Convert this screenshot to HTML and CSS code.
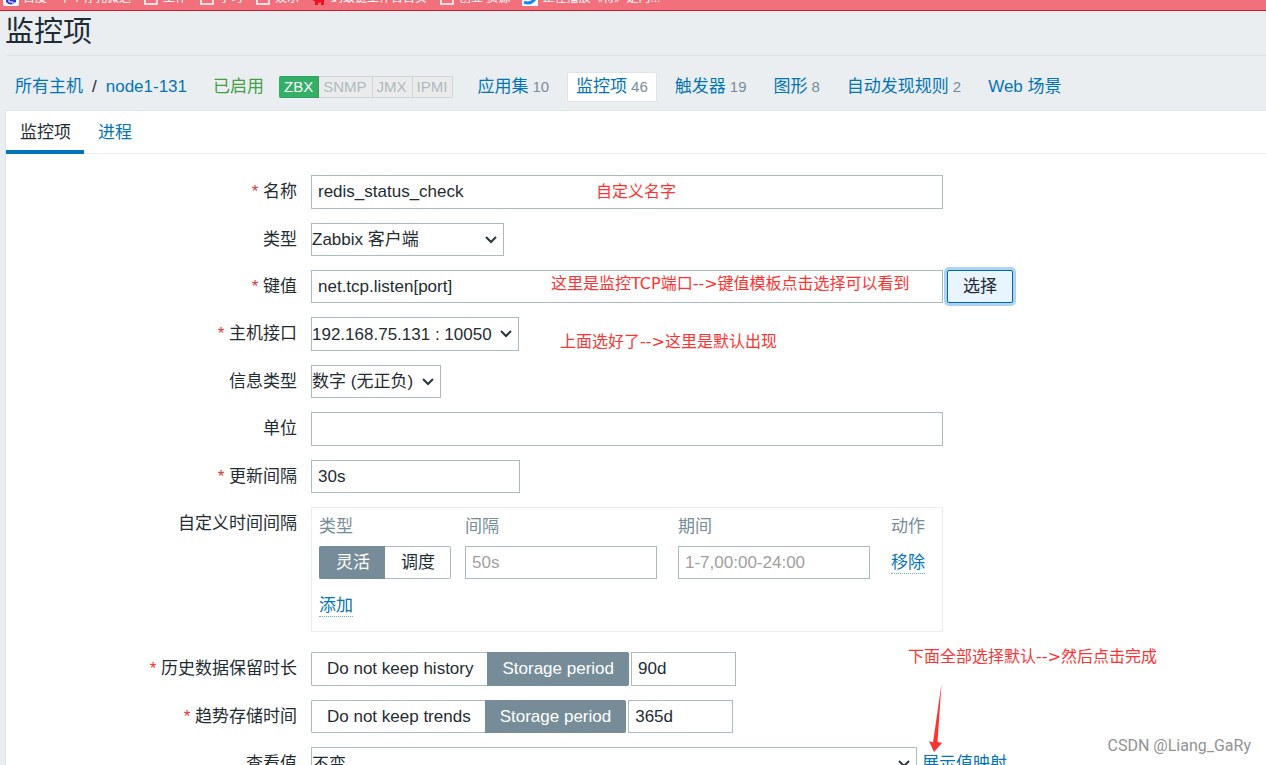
FILE: index.html
```html
<!DOCTYPE html>
<html lang="zh-CN">
<head>
<meta charset="utf-8">
<title>监控项</title>
<link rel="stylesheet" href="styles.css">
</head>
<body>
<div class="bookmarks">
  <ul class="bookmark-list">
    <li><svg width="16" height="16" viewBox="0 0 16 16"><rect width="16" height="16" rx="2" fill="#fff"/><path d="M3 9q5-7 10 0v3q-5 5-10 0z" fill="#2a36d8"/><path d="M5 11h2v2M9 11v2h3" fill="none" stroke="#fff"/></svg>百度</li>
    <li>中个存孔微达</li>
    <li><svg width="16" height="16" viewBox="0 0 16 16"><path d="M2 3h5l2 2h5v9H2z" fill="none" stroke="#fff" stroke-width="1.5"/></svg>工作</li>
    <li><svg width="16" height="16" viewBox="0 0 16 16"><path d="M2 3h5l2 2h5v9H2z" fill="none" stroke="#fff" stroke-width="1.5"/></svg>学习</li>
    <li><svg width="16" height="16" viewBox="0 0 16 16"><path d="M2 3h5l2 2h5v9H2z" fill="none" stroke="#fff" stroke-width="1.5"/></svg>娱乐</li>
    <li><svg width="16" height="16" viewBox="0 0 16 16"><path d="M3 8l5 2 5-1v6h-3v-3l-3 1v2H4v-4H2z" fill="#f01020"/></svg>蚂蚁链工作台首页</li>
    <li><svg width="16" height="16" viewBox="0 0 16 16"><path d="M2 3h5l2 2h5v9H2z" fill="none" stroke="#fff" stroke-width="1.5"/></svg>创业 资源</li>
    <li><svg width="16" height="16" viewBox="0 0 16 16"><rect width="16" height="16" fill="#fff"/><path d="M2 12q6 3 11-3" fill="none" stroke="#1688ea" stroke-width="3"/></svg>正在播放《将》是内...</li>
  </ul>
</div>

<header class="page-header"><h1>监控项</h1></header>

<nav class="host-nav">
  <div class="crumbs"><a href="#">所有主机</a><span>/</span><a href="#">node1-131</a></div>
  <span class="enabled">已启用</span>
  <div class="status"><span class="status-on">ZBX</span><span>SNMP</span><span>JMX</span><span>IPMI</span></div>
  <ul class="links">
    <li><a href="#">应用集</a><sup>10</sup></li>
    <li class="selected"><a href="#">监控项</a><sup>46</sup></li>
    <li><a href="#">触发器</a><sup>19</sup></li>
    <li><a href="#">图形</a><sup>8</sup></li>
    <li><a href="#">自动发现规则</a><sup>2</sup></li>
    <li><a href="#">Web 场景</a></li>
  </ul>
</nav>

<main class="panel">
  <div class="tabs"><a class="tab tab-active" href="#">监控项</a><a class="tab" href="#">进程</a></div>
  <form class="form">
    <div class="row tall">
      <label class="label required" for="name">名称</label>
      <div class="field"><input class="w-full" id="name" type="text" value="redis_status_check"><span class="note note-name">自定义名字</span></div>
    </div>
    <div class="row">
      <label class="label" for="type">类型</label>
      <div class="field"><span class="select w-type"><select id="type"><option>Zabbix 客户端</option></select><svg width="12" height="8" viewBox="0 0 12 8"><path d="M1 1l5 5 5-5"/></svg></span></div>
    </div>
    <div class="row">
      <label class="label required" for="key">键值</label>
      <div class="field"><input class="w-full" id="key" type="text" value="net.tcp.listen[port]"><button class="pick" type="button">选择</button><span class="note note-key">这里是监控TCP端口--&gt;键值模板点击选择可以看到</span></div>
    </div>
    <div class="row tall">
      <label class="label required" for="iface">主机接口</label>
      <div class="field"><span class="select w-iface"><select id="iface"><option>192.168.75.131 : 10050</option></select><svg width="12" height="8" viewBox="0 0 12 8"><path d="M1 1l5 5 5-5"/></svg></span><span class="note note-iface">上面选好了--&gt;这里是默认出现</span></div>
    </div>
    <div class="row">
      <label class="label" for="info">信息类型</label>
      <div class="field"><span class="select w-info"><select id="info"><option>数字 (无正负)</option></select><svg width="12" height="8" viewBox="0 0 12 8"><path d="M1 1l5 5 5-5"/></svg></span></div>
    </div>
    <div class="row tall">
      <label class="label" for="unit">单位</label>
      <div class="field"><input class="w-full" id="unit" type="text"></div>
    </div>
    <div class="row">
      <label class="label required" for="interval">更新间隔</label>
      <div class="field"><input class="w-interval" id="interval" type="text" value="30s"></div>
    </div>
    <div class="row row-box">
      <span class="label" id="custom">自定义时间间隔</span>
      <div class="interval-box w-full">
        <table class="intervals" aria-labelledby="custom">
          <thead><tr><th class="col-type">类型</th><th class="col-time">间隔</th><th class="col-time">期间</th><th>动作</th></tr></thead>
          <tbody>
            <tr>
              <td><span class="segment"><label><input type="radio" name="kind" checked><span>灵活</span></label><label><input type="radio" name="kind"><span>调度</span></label></span></td>
              <td><input class="w-time" type="text" placeholder="50s" aria-label="间隔"></td>
              <td><input class="w-time" type="text" placeholder="1-7,00:00-24:00" aria-label="期间"></td>
              <td><button class="link" type="button">移除</button></td>
            </tr>
          </tbody>
        </table>
        <button class="link" type="button">添加</button>
      </div>
    </div>
    <div class="row tall">
      <label class="label required" for="history">历史数据保留时长</label>
      <div class="field"><span class="segment"><label><input type="radio" name="history"><span>Do not keep history</span></label><label><input type="radio" name="history" checked><span>Storage period</span></label></span><input class="w-period" id="history" type="text" value="90d"><span class="note note-rest">下面全部选择默认--&gt;然后点击完成</span></div>
    </div>
    <div class="row">
      <label class="label required" for="trends">趋势存储时间</label>
      <div class="field"><span class="segment"><label><input type="radio" name="trends"><span>Do not keep trends</span></label><label><input type="radio" name="trends" checked><span>Storage period</span></label></span><input class="w-period" id="trends" type="text" value="365d">
        <svg class="arrow" width="14" height="70" viewBox="0 0 14 70"><path d="M12.500 1L8.500 59L13 60L5 69L0 58L4 59.500Z" fill="#ff3232"/></svg></div>
    </div>
    <div class="row">
      <label class="label" for="view">查看值</label>
      <div class="field"><span class="select w-view"><select id="view"><option>不变</option></select><svg width="12" height="8" viewBox="0 0 12 8"><path d="M1 1l5 5 5-5"/></svg></span><a class="mapping" href="#">展示值映射</a></div>
    </div>
  </form>
</main>
<div class="watermark">CSDN @Liang_GaRy</div>
</body>
</html>
```

FILE: styles.css
```css
* { box-sizing: border-box; }

body {
  margin: 0;
  height: 100vh;
  overflow: hidden;
  display: flex;
  flex-direction: column;
  background: #ebeef0;
  color: #1f2c33;
  font: 17px/24px "Liberation Sans", "Noto Sans CJK SC", sans-serif;
}

a { color: #0275b8; text-decoration: none; }
ul { margin: 0; padding: 0; list-style: none; }
input, select, button { font: inherit; color: inherit; }

.bookmarks {
  flex: none;
  height: 11px;
  overflow: hidden;
  display: flex;
  align-items: flex-end;
  background: #f1707c;
  border-bottom: 1px solid #c51f35;
}
.bookmark-list {
  display: flex;
  gap: 12px;
  padding-left: 3px;
  margin-bottom: 3px;
  color: #fff;
  font-size: 12px;
  line-height: 18px;
  white-space: nowrap;
}
.bookmark-list li { display: flex; align-items: center; gap: 4px; }

.page-header {
  flex: none;
  height: 45px;
  margin-left: 5px;
  border-bottom: 1px solid #dfe4e7;
}
h1 { margin: 0; font-size: 29px; font-weight: 400; line-height: 42px; }

.host-nav {
  flex: none;
  height: 54px;
  padding: 7px 0 0 15px;
  display: flex;
  align-items: center;
  white-space: nowrap;
}
.crumbs { display: flex; gap: 9px; }
.enabled { margin-left: 26px; color: #429e47; }
.status { display: flex; margin-left: 15px; font-size: 15px; line-height: 20px; }
.status span {
  padding: 0 5px 0 4px;
  border: 1px solid #ccd5d9;
  border-left: 0;
  background: #ebebeb;
  color: #acbbc2;
}
.status .status-on {
  padding-left: 5px;
  border-color: #2f9f5e;
  border-radius: 2px 0 0 2px;
  background: #34af67;
  color: #fff;
}
.status span:last-child { border-radius: 0 2px 2px 0; }
.links { display: flex; gap: 9px; margin-left: 15px; }
.links li {
  display: flex;
  gap: 4px;
  padding: 2px 8px;
  border: 1px solid transparent;
  border-radius: 2px;
}
.links .selected { background: #fff; border-color: #dfe4e7; }
sup { color: #768d99; font-size: 15px; line-height: 24px; vertical-align: baseline; }

.panel {
  flex: 1;
  margin-left: 5px;
  background: #fff;
  border: 1px solid #dfe4e7;
  border-right: 0;
}
.tabs { display: flex; height: 43px; border-bottom: 1px solid #ebeef0; }
.tab { height: 43px; padding: 10px 13px 0 14px; }
.tab-active { color: #1f2c33; border-bottom: 4px solid #0275b8; }

.form { display: flex; flex-direction: column; gap: 14px; padding-top: 21px; }
.row {
  display: grid;
  grid-template-columns: 291px 1fr;
  column-gap: 14px;
  min-height: 33px;
}
.row.tall { min-height: 34px; }
.row-box { margin-bottom: 6px; }
.label { line-height: 34px; height: 33px; text-align: right; }
.required::before { content: "* "; color: #e33734; }
.field { position: relative; display: flex; white-space: nowrap; }

input[type="text"] {
  padding: 0 7px 0 6px;
  border: 1px solid #acbbc2;
  border-radius: 0;
  background: #fff;
  outline: 0;
}
input::placeholder { color: #a0a0a0; opacity: 1; }
.w-full { width: 632px; }
.w-interval { width: 209px; }
.w-time { width: 192px; height: 33px; }
.w-period { width: 105px; margin-left: 2px; }
.w-type { width: 193px; }
.w-iface { width: 208px; }
.w-info { width: 130px; }
.w-view { width: 606px; }

.select { position: relative; display: flex; }
.select select {
  width: 100%;
  padding: 1px 0 0;
  border: 1px solid #acbbc2;
  border-radius: 0;
  background: #fff;
  appearance: none;
}
.select svg {
  position: absolute;
  right: 7px;
  top: 50%;
  margin-top: -4px;
  fill: none;
  stroke: #2b363c;
  stroke-width: 2;
  pointer-events: none;
}

.pick {
  width: 66px;
  margin-left: 4px;
  padding: 1px 0 0;
  border: 1px solid #0268a4;
  border-radius: 2px;
  background: #e8f4ff;
  box-shadow: 0 0 0 3px #aed3f2;
}

.interval-box { height: 125px; border: 1px solid #ebeef0; padding: 6px 7px; }
.intervals { border-collapse: collapse; margin-bottom: 15px; }
.intervals th {
  height: 32px;
  padding: 0 0 6px;
  color: #768d99;
  font-weight: 400;
  text-align: left;
}
.intervals td { padding: 0; }
.col-type { width: 146px; }
.col-time { width: 213px; }
.link {
  padding: 0;
  border: 0;
  border-bottom: 1px dotted #67acd4;
  background: none;
  color: #0275b8;
  line-height: 21px;
}

.segment { display: inline-flex; height: 100%; min-height: 33px; vertical-align: top; }
.segment input { position: absolute; opacity: 0; margin: 0; }
.segment label { display: flex; }
.segment span {
  display: flex;
  align-items: center;
  justify-content: center;
  min-width: 66px;
  padding: 0 14px 0 15px;
  border: 1px solid #acbbc2;
}
.segment label:first-child span { border-right: 0; border-radius: 2px 0 0 2px; }
.segment label:last-child span { border-left: 0; border-radius: 0 2px 2px 0; }
.segment input:checked + span { background: #768d99; border-color: #768d99; color: #fff; }

.mapping { margin-left: 5px; line-height: 34px; }

.note {
  position: absolute;
  color: #ff3232;
  font-family: "DejaVu Sans", "Noto Sans CJK SC", sans-serif;
  font-size: 16px;
}
.note-name { left: 285px; top: 5px; }
.note-key { left: 240px; top: 2px; }
.note-iface { left: 249px; top: 13px; }
.note-rest { left: 597px; top: -7px; }
.arrow { position: absolute; left: 618px; top: -17px; z-index: 1; }

.watermark {
  position: absolute;
  right: 15px;
  bottom: 7px;
  color: #929292;
  font-family: Roboto, sans-serif;
  font-size: 16px;
}
```
